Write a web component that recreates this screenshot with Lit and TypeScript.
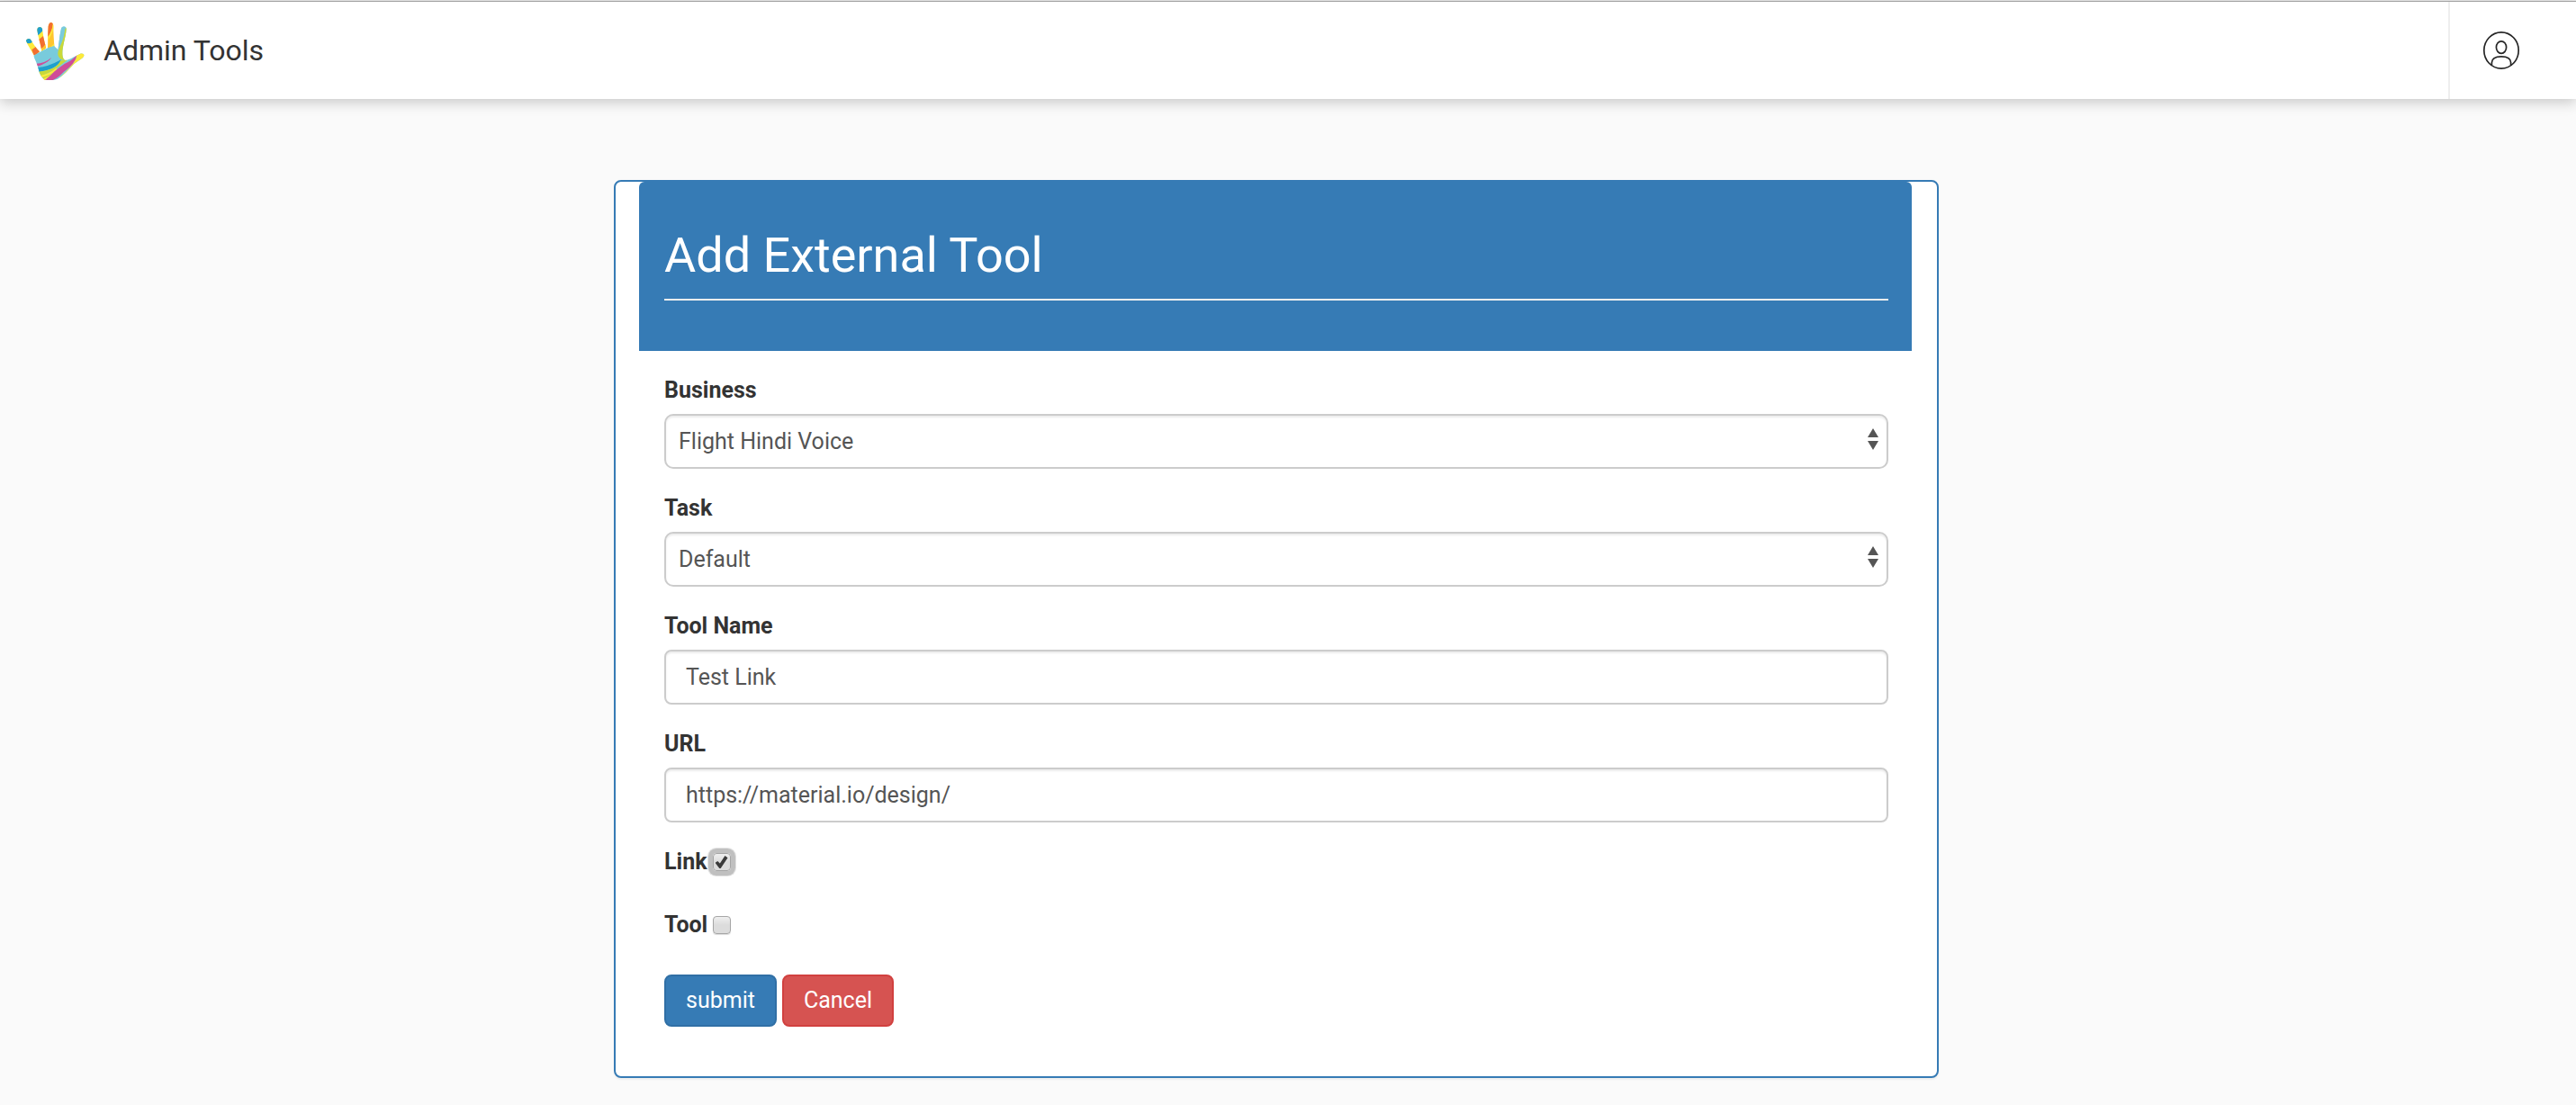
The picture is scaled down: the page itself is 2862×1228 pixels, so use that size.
import { LitElement, html, css, svg } from "lit";
import { customElement, state } from "lit/decorators.js";

const handLogo = svg`
  <svg class="logo" viewBox="0 0 240 240" aria-hidden="true">
    <defs>
      <clipPath id="pinky"><path d="M27 90C26 82 36 78 42 83C50 96 60 112 72 124L56 140C46 124 36 108 27 90Z"/></clipPath>
      <clipPath id="ring"><path d="M64 54C62 40 78 38 81 48C84 70 87 90 94 112L79 124C76 100 67 76 64 54Z"/></clipPath>
      <clipPath id="middle"><path d="M101 40C103 24 117 23 118 38C118 62 119 84 122 110L99 118C100 92 99 66 101 40Z"/></clipPath>
      <clipPath id="palm"><path d="M52 137L100 112L120 106L133 118C137 96 138 72 144 47C147 36 162 37 161 50C159 78 148 104 148 130C148 142 151 151 158 153C176 150 196 136 206 132C216 128 224 134 219 140C210 152 196 156 186 166C168 186 152 204 132 215C120 221 100 218 88 218C78 210 72 198 69 186C66 166 56 152 52 137Z"/></clipPath>
    </defs>
    <g clip-path="url(#pinky)">
      <path fill="#fde93a" d="M20 75h60v70h-60z"/>
      <path fill="#1f9fcc" d="M22 76h26l0 16q-8 6-18 4z"/>
      <path fill="#f26f31" d="M46 118L62 106L74 122L54 142Z"/>
    </g>
    <g clip-path="url(#ring)">
      <path fill="#fde93a" d="M55 35h45v95h-45z"/>
      <path fill="#1f9fcc" d="M58 36h28l-5 20l-14 14l-8-8z"/>
      <path fill="#f26f31" d="M66 86L84 72L94 100L76 116Z"/>
      <path fill="#ffc52e" d="M76 122L92 98L98 112Z"/>
    </g>
    <g clip-path="url(#middle)">
      <path fill="#ffc52e" d="M95 20h30v100h-30z"/>
      <path fill="#f26f31" d="M96 20h24l-4 12q-2 26-18 44z"/>
      <path fill="#fde93a" d="M98 78Q114 56 116 34L120 34Q118 62 99 88Z"/>
      <path fill="#fde93a" d="M98 118L122 96V104L100 122Z"/>
    </g>
    <g clip-path="url(#palm)">
      <path fill="#79cbdc" d="M45 30h185v195h-185z"/>
      <path fill="#f26f31" d="M106 122Q116 116 122 106L122 114Q114 120 98 124Z"/>
      <path fill="#c9d938" d="M162 40L156 52C154 84 140 104 134 122C131 134 134 142 144 150L162 156Z"/>
      <path fill="#79cbdc" d="M140 40L156 42L153 62C148 84 136 100 130 120C120 140 96 150 60 154L52 140Z"/>
      <path fill="#cf4d98" d="M60 164Q88 164 112 144Q104 160 64 174Z"/>
      <path fill="#79cbdc" d="M64 174Q92 168 112 146L134 150L100 170L66 180Z"/>
      <path fill="#1f9fcc" d="M66 177Q98 176 144 151Q134 182 70 192Z"/>
      <path fill="#c9d938" d="M68 191Q128 186 142 154L162 154L120 186L76 206Z"/>
      <path fill="#fde93a" d="M74 204Q104 198 126 180L132 182Q112 202 80 211Z"/>
      <path fill="#c9d938" d="M82 210Q108 202 126 190L118 204L88 218Z"/>
      <path fill="#fde93a" d="M84 214Q108 206 122 192L128 190L104 214L86 222Z"/>
      <path fill="#fde93a" d="M194 132L230 124V150L180 176L140 222L128 220Q176 180 194 146Z"/>
      <path fill="#cf4d98" d="M88 220Q110 204 122 190Q138 176 156 164Q178 156 196 136Q192 164 152 192Q130 216 108 222Z"/>
    </g>
  </svg>`;

const userIcon = svg`
  <svg class="user-icon" viewBox="0 0 42 42" aria-hidden="true">
    <g fill="none" stroke="#262626" stroke-width="1.7">
      <ellipse cx="21" cy="21" rx="19.2" ry="20.1"/>
      <ellipse cx="21" cy="17.6" rx="5.6" ry="6.8"/>
      <path d="M10.4 37.6V34.6C10.6 30.2 14.4 27.8 21 27.8S31.500 30.200 31.600 34.600V37.600"/>
    </g>
  </svg>`;

@customElement("app-root")
export class AppRoot extends LitElement {
  @state() private link = true;
  @state() private tool = false;

  static styles = css`
    :host {
      display: flex;
      flex-direction: column;
      min-height: 100vh;
      box-sizing: border-box;
      border-top: 1px solid #eee;
      background: #fafafa;
      color: #333;
      font: 25px/30px Roboto, "Liberation Sans", sans-serif;
    }
    *, *::before, *::after { box-sizing: border-box; }

    .topbar {
      display: flex;
      align-items: stretch;
      min-height: 109px;
      background: #fff;
      border-top: 1px solid #a2a2a2;
      box-shadow: 0 4px 14px rgba(0, 0, 0, 0.2);
    }
    .brand {
      flex: 1;
      display: flex;
      align-items: center;
      gap: 15px;
      padding-left: 20px;
      color: inherit;
      text-decoration: none;
      font-size: 32px;
      line-height: 40px;
    }
    .logo { width: 80px; height: 80px; }
    .account {
      display: flex;
      align-items: center;
      padding: 0 62px 0 36px;
      background: none;
      border: 0;
      border-left: 2px solid #eee;
    }
    .user-icon { width: 42px; height: 42px; display: block; }

    .page {
      display: flex;
      justify-content: center;
      padding: 90px 26px 30px 0;
    }
    .card {
      flex: 1;
      max-width: 1472px;
      padding: 0 28px 55px 26px;
      background: #fff;
      border: 2px solid #367bb5;
      border-radius: 8px;
      box-shadow: 0 2px 2px rgba(0, 0, 0, 0.05);
    }
    .card-head {
      padding: 48px 26px 56px 28px;
      background: #367bb5;
      border-radius: 6px 6px 0 0;
      color: #fff;
    }
    h1 {
      margin: 0;
      padding-bottom: 14px;
      border-bottom: 2px solid #eee;
      font-size: 54px;
      font-weight: 400;
      line-height: 68px;
    }
    form { padding: 29px 26px 0 28px; }
    .field {
      display: flex;
      flex-direction: column;
      gap: 11px;
      margin-bottom: 29px;
    }
    label { font-weight: 700; }
    .control {
      width: 100%;
      height: 61px;
      margin: 0;
      padding: 0 22px;
      border: 2px solid #ccc;
      border-radius: 8px;
      background: #fff;
      box-shadow: inset 0 2px 2px rgba(0, 0, 0, 0.075);
      color: #555;
      font: inherit;
      outline: none;
    }
    .select { position: relative; display: flex; }
    .select .control {
      appearance: none;
      padding: 0 14px;
      border-radius: 10px;
    }
    .arrows {
      position: absolute;
      right: 11px;
      top: 16px;
      width: 12px;
      height: 24px;
      fill: #555;
      pointer-events: none;
    }
    .check {
      display: flex;
      align-items: center;
      height: 30px;
      margin-bottom: 40px;
    }
    .check input {
      appearance: none;
      display: grid;
      place-items: center;
      width: 20px;
      height: 20px;
      margin: 0 6px;
      border: 1px solid #a6a6a6;
      border-radius: 4px;
      background: linear-gradient(#efefef, #dcdcdc 50%);
      box-shadow: 0 1px 1px rgba(0, 0, 0, 0.15);
      outline: none;
    }
    .check input:checked {
      box-shadow: 0 0 0 5px #c0c0c0, 0 0 0 6px #e2e2e2;
    }
    .check input:checked::before {
      content: "";
      width: 14px;
      height: 14px;
      background: #3a3a3a;
      clip-path: polygon(0 55%, 20% 42%, 38% 60%, 78% 0, 100% 16%, 44% 100%, 34% 100%);
    }
    .actions { display: flex; gap: 6px; }
    .btn {
      height: 58px;
      padding: 0 22px;
      border: 2px solid #306fa5;
      border-radius: 8px;
      background: #367bb5;
      color: #fff;
      font: inherit;
    }
    .btn-danger { background: #d65351; border-color: #d1403f; }
  `;

  private arrows() {
    return html`<svg class="arrows" viewBox="0 0 12 24" aria-hidden="true">
      <path d="M6 0L12 10H0ZM0 14H12L6 24Z"/>
    </svg>`;
  }

  render() {
    return html`
      <header class="topbar">
        <a class="brand" href="#">${handLogo}<span>Admin Tools</span></a>
        <button class="account" type="button" aria-label="Account">${userIcon}</button>
      </header>
      <main class="page">
        <section class="card">
          <div class="card-head"><h1>Add External Tool</h1></div>
          <form @submit=${(e: Event) => e.preventDefault()}>
            <div class="field">
              <label for="business">Business</label>
              <div class="select">
                <select id="business" class="control"><option>Flight Hindi Voice</option></select>
                ${this.arrows()}
              </div>
            </div>
            <div class="field">
              <label for="task">Task</label>
              <div class="select">
                <select id="task" class="control"><option>Default</option></select>
                ${this.arrows()}
              </div>
            </div>
            <div class="field">
              <label for="name">Tool Name</label>
              <input id="name" class="control" type="text" value="Test Link">
            </div>
            <div class="field">
              <label for="url">URL</label>
              <input id="url" class="control" type="text" value="https://material.io/design/">
            </div>
            <div class="check">
              <label for="link">Link</label>
              <input id="link" type="checkbox" .checked=${this.link}
                @change=${() => { this.link = !this.link; }}>
            </div>
            <div class="check">
              <label for="tool">Tool</label>
              <input id="tool" type="checkbox" .checked=${this.tool}
                @change=${() => { this.tool = !this.tool; }}>
            </div>
            <div class="actions">
              <button class="btn" type="submit">submit</button>
              <button class="btn btn-danger" type="button">Cancel</button>
            </div>
          </form>
        </section>
      </main>
    `;
  }
}
